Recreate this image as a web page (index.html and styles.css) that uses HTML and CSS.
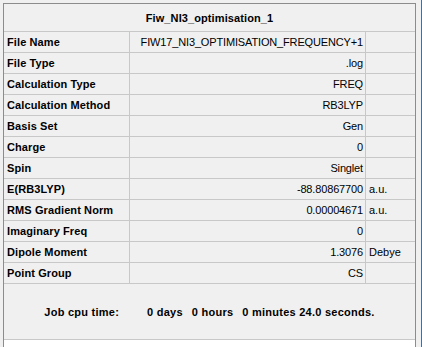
FILE: index.html
```html
<!DOCTYPE html>
<html lang="en">

<head>
	<meta charset="UTF-8">
	<meta name="viewport" content="width=device-width, initial-scale=1.0">
	<title>Fiw_NI3_optimisation_1</title>
	<link rel="stylesheet" href="styles.css">
</head>

<body>
	<div class="window">
		<section class="panel">
			<div class="panel-title">Fiw_NI3_optimisation_1</div>

			<div class="summary">
				<div class="row"><div class="key">File Name</div><div class="val">FIW17_NI3_OPTIMISATION_FREQUENCY+1</div><div class="unit"></div></div>
				<div class="row"><div class="key">File Type</div><div class="val">.log</div><div class="unit"></div></div>
				<div class="row"><div class="key">Calculation Type</div><div class="val">FREQ</div><div class="unit"></div></div>
				<div class="row"><div class="key">Calculation Method</div><div class="val">RB3LYP</div><div class="unit"></div></div>
				<div class="row"><div class="key">Basis Set</div><div class="val">Gen</div><div class="unit"></div></div>
				<div class="row"><div class="key">Charge</div><div class="val">0</div><div class="unit"></div></div>
				<div class="row"><div class="key">Spin</div><div class="val">Singlet</div><div class="unit"></div></div>
				<div class="row"><div class="key">E(RB3LYP)</div><div class="val">-88.80867700</div><div class="unit">a.u.</div></div>
				<div class="row"><div class="key">RMS Gradient Norm</div><div class="val">0.00004671</div><div class="unit">a.u.</div></div>
				<div class="row"><div class="key">Imaginary Freq</div><div class="val">0</div><div class="unit"></div></div>
				<div class="row"><div class="key">Dipole Moment</div><div class="val">1.3076</div><div class="unit">Debye</div></div>
				<div class="row"><div class="key">Point Group</div><div class="val">CS</div><div class="unit"></div></div>
			</div>

			<div class="cpu-time">
				<span class="cpu-label">Job cpu time:</span>
				<span>0 days</span>
				<span>0 hours</span>
				<span>0 minutes 24.0 seconds.</span>
			</div>

			<div class="panel-rest"></div>
		</section>
	</div>
</body>

</html>
```

FILE: styles.css
```css
* {
	margin: 0;
	padding: 0;
	box-sizing: border-box;
}

html,
body {
	height: 100%;
}

body {
	background-color: #f0f0f0;
	font-family: "Liberation Sans", Arial, sans-serif;
	font-size: 11px;
	color: #000;
	overflow: hidden;
}

.window {
	height: 100%;
	padding: 3px 0 0 3px;
	border-right: 1px solid #1979d4;
	display: flex;
}

.panel {
	width: 413px;
	display: flex;
	flex-direction: column;
	border: 1px solid #8c8c8c;
	border-bottom: none;
}

.panel-title {
	height: 28px;
	display: flex;
	align-items: center;
	justify-content: center;
	font-weight: bold;
	letter-spacing: 0.1px;
	border-bottom: 1px solid #c8c8c8;
}

.row {
	display: grid;
	grid-template-columns: 126px 236px 1fr;
	height: 21px;
	border-bottom: 1px solid #c8c8c8;
}

.row > div {
	display: flex;
	align-items: center;
	white-space: nowrap;
	overflow: hidden;
}

.key {
	padding-left: 3px;
	font-weight: bold;
	letter-spacing: 0.1px;
	border-right: 1px solid #c8c8c8;
}

.val {
	justify-content: flex-end;
	padding-right: 2px;
	letter-spacing: -0.15px;
	border-right: 1px solid #c8c8c8;
}

.unit {
	padding-left: 3px;
}

.cpu-time {
	height: 56px;
	display: flex;
	align-items: center;
	justify-content: center;
	gap: 9px;
	font-weight: bold;
	letter-spacing: 0.25px;
	border-bottom: 1px solid #c8c8c8;
	white-space: nowrap;
}

.cpu-label {
	margin-right: 19px;
}

.panel-rest {
	flex: 1;
	background: #fff;
}
```
